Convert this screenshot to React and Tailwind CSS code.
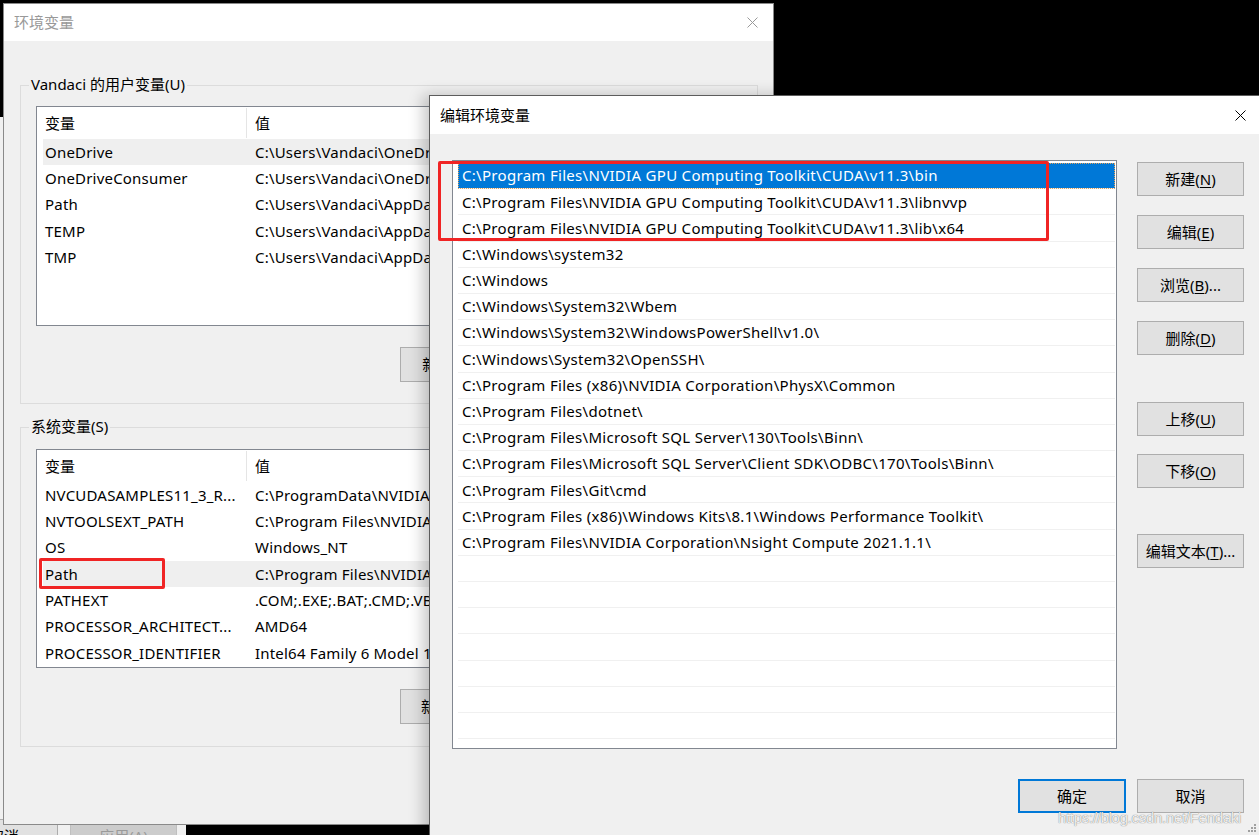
const FONT = "font-['Noto_Sans','Noto_Sans_CJK_SC',sans-serif]";

const userVars = [
  ["OneDrive", "C:\\Users\\Vandaci\\OneDrive"],
  ["OneDriveConsumer", "C:\\Users\\Vandaci\\OneDrive"],
  ["Path", "C:\\Users\\Vandaci\\AppData\\Local\\Microsoft\\WindowsApps;"],
  ["TEMP", "C:\\Users\\Vandaci\\AppData\\Local\\Temp"],
  ["TMP", "C:\\Users\\Vandaci\\AppData\\Local\\Temp"],
];

const systemVars = [
  ["NVCUDASAMPLES11_3_R...", "C:\\ProgramData\\NVIDIA Corporation\\CUDA Samples\\v11.3"],
  ["NVTOOLSEXT_PATH", "C:\\Program Files\\NVIDIA Corporation\\NvToolsExt\\"],
  ["OS", "Windows_NT"],
  ["Path", "C:\\Program Files\\NVIDIA GPU Computing Toolkit\\CUDA\\v11.3\\bin;"],
  ["PATHEXT", ".COM;.EXE;.BAT;.CMD;.VBS;.VBE;.JS;.JSE;.WSF;.WSH;.MSC"],
  ["PROCESSOR_ARCHITECT...", "AMD64"],
  ["PROCESSOR_IDENTIFIER", "Intel64 Family 6 Model 158 Stepping 10, GenuineIntel"],
];

const pathEntries = [
  "C:\\Program Files\\NVIDIA GPU Computing Toolkit\\CUDA\\v11.3\\bin",
  "C:\\Program Files\\NVIDIA GPU Computing Toolkit\\CUDA\\v11.3\\libnvvp",
  "C:\\Program Files\\NVIDIA GPU Computing Toolkit\\CUDA\\v11.3\\lib\\x64",
  "C:\\Windows\\system32",
  "C:\\Windows",
  "C:\\Windows\\System32\\Wbem",
  "C:\\Windows\\System32\\WindowsPowerShell\\v1.0\\",
  "C:\\Windows\\System32\\OpenSSH\\",
  "C:\\Program Files (x86)\\NVIDIA Corporation\\PhysX\\Common",
  "C:\\Program Files\\dotnet\\",
  "C:\\Program Files\\Microsoft SQL Server\\130\\Tools\\Binn\\",
  "C:\\Program Files\\Microsoft SQL Server\\Client SDK\\ODBC\\170\\Tools\\Binn\\",
  "C:\\Program Files\\Git\\cmd",
  "C:\\Program Files (x86)\\Windows Kits\\8.1\\Windows Performance Toolkit\\",
  "C:\\Program Files\\NVIDIA Corporation\\Nsight Compute 2021.1.1\\",
];

function CloseIcon({ color = "#000" }) {
  return (
    <svg width="11" height="11" viewBox="0 0 11 11">
      <path d="M0.5 0.5 L10.5 10.5 M10.5 0.5 L0.5 10.5" stroke={color} strokeWidth="1" />
    </svg>
  );
}

function Key({ children }) {
  return <span className="underline underline-offset-2 decoration-1">{children}</span>;
}

function WinButton({ children, primary = false, className = "" }) {
  return (
    <div
      className={`flex shrink-0 items-center justify-center bg-[#e1e1e1] text-[15px] text-black whitespace-nowrap ${
        primary ? "border-2 border-[#0078d7]" : "border border-[#adadad]"
      } ${className}`}
    >
      {children}
    </div>
  );
}

// list view of the back window; values are clipped where the front dialog starts
function VarList({ rows, highlight, height, marked }) {
  return (
    <div className={`ml-[15px] w-[705px] ${height} border border-[#828790] bg-white overflow-hidden`}>
      <div className="flex h-[32px] pl-[6px] text-[15px]">
        <div className="w-[204px] pl-[2px] flex items-center border-r border-[#e5e5e5] my-[1px]">变量</div>
        <div className="pl-[8px] flex items-center">值</div>
      </div>
      {rows.map(([name, value]) => (
        <div
          key={name + value}
          className={`flex h-[26.3px] ml-[6px] items-center text-[15px] tracking-[0.2px] whitespace-nowrap ${
            name === highlight ? "bg-[#efefef]" : ""
          }`}
        >
          <div className="w-[204px] pl-[2px] overflow-hidden">{name}</div>
          <div className="w-[182px] pl-[8px] overflow-hidden">{value}</div>
          {marked === name && (
            <div className="absolute -ml-[4px] -mt-[1px] w-[126px] h-[31px] border-[3px] border-[#f02424] rounded-[2px]" />
          )}
        </div>
      ))}
    </div>
  );
}

function GroupBox({ label, children, className = "" }) {
  return (
    <div className={`ml-[16px] w-[738px] border border-[#dcdcdc] ${className}`}>
      <div className="-mt-[12px] ml-[8px] w-fit px-[2px] bg-[#f0f0f0] text-[15px] leading-[20px]">{label}</div>
      {children}
    </div>
  );
}

function PartialButtons({ keys }) {
  return (
    <div className="mt-[21px] ml-[379px] w-[29px] overflow-hidden">
      <WinButton className="w-[107px] h-[35px]">
        新建(<Key>{keys}</Key>)...
      </WinButton>
    </div>
  );
}

function EnvironmentWindow() {
  return (
    <div className="absolute left-[3px] top-[3px] w-[771px] h-[822px] flex flex-col border border-[#8a8a8a] bg-[#f0f0f0]">
      <div className="flex h-[37px] shrink-0 items-center justify-between bg-white pl-[10px] pr-[15px]">
        <span className="text-[15px] text-[#999]">环境变量</span>
        <CloseIcon color="#999" />
      </div>
      <GroupBox label="Vandaci 的用户变量(U)" className="mt-[44px] h-[319px]">
        <div className="mt-[12px]">
          <VarList rows={userVars} highlight="OneDrive" height="h-[220px]" />
        </div>
        <PartialButtons keys="N" />
      </GroupBox>
      <GroupBox label="系统变量(S)" className="mt-[23px] h-[320px]">
        <div className="mt-[13px]">
          <VarList rows={systemVars} highlight="Path" marked="Path" height="h-[219px]" />
        </div>
        <PartialButtons keys="W" />
      </GroupBox>
    </div>
  );
}

function PathList() {
  const rows = [...pathEntries, ...Array(22 - pathEntries.length).fill("")];
  return (
    <div className="relative w-[665px] h-[589px] shrink-0">
      <div className="w-full h-full border border-[#828790] bg-white pt-[2px] pl-[5px] pr-[1px] overflow-hidden">
        {rows.map((path, index) => (
          <div
            key={index}
            className={`flex h-[26.2px] items-center pl-[4px] text-[15px] tracking-[0.3px] whitespace-nowrap border-b border-[#f0f0f0] ${
              index === 0
                ? "bg-[#0078d7] text-white outline-1 outline-dotted outline-[#e2a15a] -outline-offset-1"
                : "text-black"
            }`}
          >
            {path}
          </div>
        ))}
      </div>
      <div className="absolute -left-[14px] top-[1px] w-[611px] h-[80px] border-[3px] border-[#f02424] rounded-[2px]" />
    </div>
  );
}

function EditDialog() {
  return (
    <div className="absolute left-[429px] top-[95px] w-[840px] h-[760px] flex flex-col border-l border-t border-[#5c5c5c] bg-[#f0f0f0] shadow-[-6px_0_14px_rgba(0,0,0,0.22)]">
      <div className="flex h-[38px] shrink-0 items-center justify-between bg-white pl-[10px] pr-[23px]">
        <span className="text-[15px] text-black">编辑环境变量</span>
        <CloseIcon />
      </div>
      <div className="pl-[22px] pt-[26px]">
        <div className="flex gap-[20px]">
          <PathList />
          <div className="flex flex-col pt-[2px]">
            <WinButton className="w-[107px] h-[34px]">新建(<Key>N</Key>)</WinButton>
            <WinButton className="mt-[19px] w-[107px] h-[34px]">编辑(<Key>E</Key>)</WinButton>
            <WinButton className="mt-[19px] w-[107px] h-[34px]">浏览(<Key>B</Key>)...</WinButton>
            <WinButton className="mt-[19px] w-[107px] h-[34px]">删除(<Key>D</Key>)</WinButton>
            <WinButton className="mt-[47px] w-[107px] h-[34px]">上移(<Key>U</Key>)</WinButton>
            <WinButton className="mt-[18px] w-[107px] h-[34px]">下移(<Key>O</Key>)</WinButton>
            <WinButton className="mt-[46px] w-[107px] h-[34px]">编辑文本(<Key>T</Key>)...</WinButton>
          </div>
        </div>
        <div className="mt-[30px] w-[792px] flex justify-end gap-[11px]">
          <WinButton primary className="w-[108px] h-[34px]">确定</WinButton>
          <WinButton className="w-[107px] h-[34px]">取消</WinButton>
        </div>
      </div>
    </div>
  );
}

function SystemPropertiesBehind() {
  return (
    <div className="absolute left-0 top-[117px] w-[186px] h-[718px] bg-[#f0f0f0] overflow-hidden">
      <div className="mt-[702px] flex gap-[12px]">
        <WinButton className="-ml-[50px] w-[108px] h-[34px]">取消</WinButton>
        <div className="w-[107px] h-[34px] flex shrink-0 items-center justify-center border border-[#bfbfbf] bg-[#cccccc] text-[15px] text-[#9a9a9a]">
          应用(A)
        </div>
      </div>
    </div>
  );
}

export default function App() {
  return (
    <div className={`relative w-[1259px] h-[835px] overflow-hidden bg-black ${FONT}`}>
      <SystemPropertiesBehind />
      <EnvironmentWindow />
      <EditDialog />
      <div className="absolute right-[18px] bottom-[6px] text-[15px] tracking-[-0.3px] text-white/90 font-['Liberation_Sans',sans-serif] [text-shadow:0_0_1px_rgba(0,0,0,0.7)]">
        https://blog.csdn.net/Fendaki
      </div>
      <svg className="absolute right-[2px] bottom-[2px]" width="10" height="10" viewBox="0 0 10 10">
        <g fill="#a0a0a0">
          <rect x="7" y="1" width="2" height="2" />
          <rect x="4" y="4" width="2" height="2" />
          <rect x="7" y="4" width="2" height="2" />
          <rect x="1" y="7" width="2" height="2" />
          <rect x="4" y="7" width="2" height="2" />
          <rect x="7" y="7" width="2" height="2" />
        </g>
      </svg>
    </div>
  );
}
